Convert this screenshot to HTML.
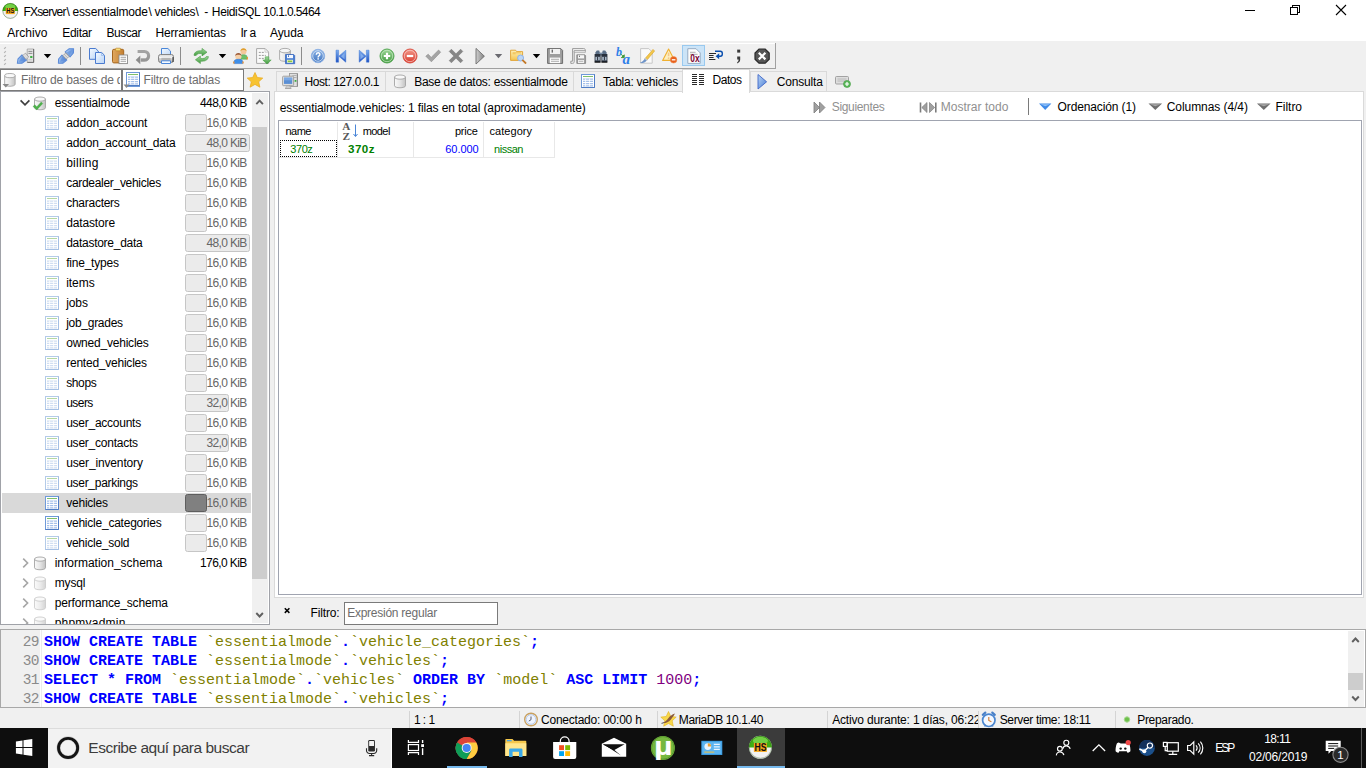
<!DOCTYPE html>
<html lang="es"><head><meta charset="utf-8"><title>HeidiSQL</title>
<style>
*{box-sizing:border-box;margin:0;padding:0}
html,body{width:1366px;height:768px;overflow:hidden;background:#f0f0f0}
body{font-family:"Liberation Sans",sans-serif;font-size:12px;color:#000;position:relative}
.a{position:absolute;white-space:pre}
.t{position:absolute;white-space:pre;line-height:14px;height:14px}
svg{position:absolute;overflow:visible}
.mono{font-family:"Liberation Mono",monospace;font-size:15px;font-weight:bold;line-height:19px;position:absolute;white-space:pre;left:44px}
.ln{font-family:"Liberation Mono",monospace;font-size:14.500px;line-height:19px;position:absolute;white-space:pre;color:#8a8a8a;left:22.700px;letter-spacing:-0.7px}
.kw{color:#0000ff}.id{color:#808000;font-weight:normal}.num{color:#800080;font-weight:normal}.sym{color:#0000ff}.dot{color:#0000ff}
</style></head>
<body>
<div class="a" style="left:0px;top:0px;width:1366px;height:22px;background:#fff"></div>
<div class="a" style="left:0px;top:22px;width:1366px;height:19px;background:#fff"></div>
<div class="t" style="left:23.400px;top:4.500px"><span style="display:inline-block;width:43.2px;letter-spacing:-0.798px;">FXserver</span><span style="display:inline-block;width:5.9px;letter-spacing:1.656px;">\</span><span style="display:inline-block;width:76.1px;letter-spacing:-0.153px;">essentialmode</span><span style="display:inline-block;width:6.0px;letter-spacing:1.656px;">\</span><span style="display:inline-block;width:41.0px;letter-spacing:-0.345px;">vehicles</span><span style="display:inline-block;width:8.6px;letter-spacing:0.664px;">\ </span><span style="display:inline-block;width:7.7px;letter-spacing:0.078px;">- </span><span style="display:inline-block;width:51.5px;letter-spacing:-0.361px;">HeidiSQL </span><span style="display:inline-block;width:66.6px;letter-spacing:-0.610px;">10.1.0.5464</span></div>
<div class="t" style="left:7.2px;top:25.5px;letter-spacing:0.055px;">Archivo</div>
<div class="t" style="left:62.3px;top:25.5px;letter-spacing:-0.310px;">Editar</div>
<div class="t" style="left:106.5px;top:25.5px;letter-spacing:-0.493px;">Buscar</div>
<div class="t" style="left:155.4px;top:25.5px;letter-spacing:-0.128px;">Herramientas</div>
<div class="t" style="left:240.4px;top:25.5px;letter-spacing:-0.536px;">Ir a</div>
<div class="t" style="left:270.1px;top:25.5px;letter-spacing:-0.142px;">Ayuda</div>
<div class="a" style="left:0px;top:43px;width:775px;height:1px;background:#fff"></div>
<div class="a" style="left:0px;top:43px;width:776px;height:26px;border-right:1px solid #a0a0a0;border-bottom:1px solid #a0a0a0"></div>
<div class="a" style="left:682px;top:45px;width:23px;height:21px;background:#cce4f7;border:1px solid #99c9ef"></div>
<div class="a" style="left:0px;top:69px;width:122px;height:22px;background:#fff;border:1px solid #7a7a7a"></div>
<div class="a" style="left:122px;top:69px;width:122px;height:22px;background:#fff;border:1px solid #7a7a7a"></div>
<div class="t" style="left:21px;top:72.500px;width:99px;overflow:hidden;color:#6d6d6d;letter-spacing:-0.15px">Filtro de bases de datos</div>
<div class="t" style="left:143.6px;top:72.5px;color:#6d6d6d;letter-spacing:-0.144px;">Filtro de tablas</div>
<div class="a" style="left:0px;top:91px;width:270px;height:534px;background:#fff;border:1px solid #a0a2a8"></div>
<div class="a" style="left:1px;top:92px;width:251px;height:532px;overflow:hidden">
<div class="t" style="left:53.700px;top:3.5px;letter-spacing:-0.184px;">essentialmode</div>
<div class="t" style="right:5.4px;top:3.5px;letter-spacing:-0.605px;">448,0 KiB</div>
<div class="a" style="left:184px;top:22px;width:22px;height:18px;background:#ebebeb;border:1px solid #c6c6c6;border-radius:2.500px"></div>
<div class="t" style="left:65.200px;top:23.5px;letter-spacing:-0.068px;">addon_account</div>
<div class="t" style="right:5.4px;top:23.5px;color:#666;letter-spacing:-0.647px;">16,0 KiB</div>
<div class="a" style="left:184px;top:42px;width:65px;height:18px;background:#ebebeb;border:1px solid #c6c6c6;border-radius:2.500px"></div>
<div class="t" style="left:65.200px;top:43.5px;letter-spacing:-0.151px;">addon_account_data</div>
<div class="t" style="right:5.4px;top:43.5px;color:#666;letter-spacing:-0.647px;">48,0 KiB</div>
<div class="a" style="left:184px;top:62px;width:22px;height:18px;background:#ebebeb;border:1px solid #c6c6c6;border-radius:2.500px"></div>
<div class="t" style="left:65.200px;top:63.5px;letter-spacing:0.259px;">billing</div>
<div class="t" style="right:5.4px;top:63.5px;color:#666;letter-spacing:-0.647px;">16,0 KiB</div>
<div class="a" style="left:184px;top:82px;width:22px;height:18px;background:#ebebeb;border:1px solid #c6c6c6;border-radius:2.500px"></div>
<div class="t" style="left:65.200px;top:83.5px;letter-spacing:-0.298px;">cardealer_vehicles</div>
<div class="t" style="right:5.4px;top:83.5px;color:#666;letter-spacing:-0.647px;">16,0 KiB</div>
<div class="a" style="left:184px;top:102px;width:22px;height:18px;background:#ebebeb;border:1px solid #c6c6c6;border-radius:2.500px"></div>
<div class="t" style="left:65.200px;top:103.5px;letter-spacing:-0.263px;">characters</div>
<div class="t" style="right:5.4px;top:103.5px;color:#666;letter-spacing:-0.647px;">16,0 KiB</div>
<div class="a" style="left:184px;top:122px;width:22px;height:18px;background:#ebebeb;border:1px solid #c6c6c6;border-radius:2.500px"></div>
<div class="t" style="left:65.200px;top:123.5px;letter-spacing:-0.139px;">datastore</div>
<div class="t" style="right:5.4px;top:123.5px;color:#666;letter-spacing:-0.647px;">16,0 KiB</div>
<div class="a" style="left:184px;top:142px;width:65px;height:18px;background:#ebebeb;border:1px solid #c6c6c6;border-radius:2.500px"></div>
<div class="t" style="left:65.200px;top:143.5px;letter-spacing:-0.276px;">datastore_data</div>
<div class="t" style="right:5.4px;top:143.5px;color:#666;letter-spacing:-0.647px;">48,0 KiB</div>
<div class="a" style="left:184px;top:162px;width:22px;height:18px;background:#ebebeb;border:1px solid #c6c6c6;border-radius:2.500px"></div>
<div class="t" style="left:65.200px;top:163.5px;letter-spacing:-0.220px;">fine_types</div>
<div class="t" style="right:5.4px;top:163.5px;color:#666;letter-spacing:-0.647px;">16,0 KiB</div>
<div class="a" style="left:184px;top:182px;width:22px;height:18px;background:#ebebeb;border:1px solid #c6c6c6;border-radius:2.500px"></div>
<div class="t" style="left:65.200px;top:183.5px;letter-spacing:-0.054px;">items</div>
<div class="t" style="right:5.4px;top:183.5px;color:#666;letter-spacing:-0.647px;">16,0 KiB</div>
<div class="a" style="left:184px;top:202px;width:22px;height:18px;background:#ebebeb;border:1px solid #c6c6c6;border-radius:2.500px"></div>
<div class="t" style="left:65.200px;top:203.5px;letter-spacing:-0.104px;">jobs</div>
<div class="t" style="right:5.4px;top:203.5px;color:#666;letter-spacing:-0.647px;">16,0 KiB</div>
<div class="a" style="left:184px;top:222px;width:22px;height:18px;background:#ebebeb;border:1px solid #c6c6c6;border-radius:2.500px"></div>
<div class="t" style="left:65.200px;top:223.5px;letter-spacing:-0.279px;">job_grades</div>
<div class="t" style="right:5.4px;top:223.5px;color:#666;letter-spacing:-0.647px;">16,0 KiB</div>
<div class="a" style="left:184px;top:242px;width:22px;height:18px;background:#ebebeb;border:1px solid #c6c6c6;border-radius:2.500px"></div>
<div class="t" style="left:65.200px;top:243.5px;letter-spacing:-0.214px;">owned_vehicles</div>
<div class="t" style="right:5.4px;top:243.5px;color:#666;letter-spacing:-0.647px;">16,0 KiB</div>
<div class="a" style="left:184px;top:262px;width:22px;height:18px;background:#ebebeb;border:1px solid #c6c6c6;border-radius:2.500px"></div>
<div class="t" style="left:65.200px;top:263.5px;letter-spacing:-0.231px;">rented_vehicles</div>
<div class="t" style="right:5.4px;top:263.5px;color:#666;letter-spacing:-0.647px;">16,0 KiB</div>
<div class="a" style="left:184px;top:282px;width:22px;height:18px;background:#ebebeb;border:1px solid #c6c6c6;border-radius:2.500px"></div>
<div class="t" style="left:65.200px;top:283.5px;letter-spacing:-0.386px;">shops</div>
<div class="t" style="right:5.4px;top:283.5px;color:#666;letter-spacing:-0.647px;">16,0 KiB</div>
<div class="a" style="left:184px;top:302px;width:43.5px;height:18px;background:#ebebeb;border:1px solid #c6c6c6;border-radius:2.500px"></div>
<div class="t" style="left:65.200px;top:303.5px;letter-spacing:-0.549px;">users</div>
<div class="t" style="right:5.4px;top:303.5px;color:#666;letter-spacing:-0.647px;">32,0 KiB</div>
<div class="a" style="left:184px;top:322px;width:22px;height:18px;background:#ebebeb;border:1px solid #c6c6c6;border-radius:2.500px"></div>
<div class="t" style="left:65.200px;top:323.5px;letter-spacing:-0.257px;">user_accounts</div>
<div class="t" style="right:5.4px;top:323.5px;color:#666;letter-spacing:-0.647px;">16,0 KiB</div>
<div class="a" style="left:184px;top:342px;width:43.5px;height:18px;background:#ebebeb;border:1px solid #c6c6c6;border-radius:2.500px"></div>
<div class="t" style="left:65.200px;top:343.5px;letter-spacing:-0.240px;">user_contacts</div>
<div class="t" style="right:5.4px;top:343.5px;color:#666;letter-spacing:-0.647px;">32,0 KiB</div>
<div class="a" style="left:184px;top:362px;width:22px;height:18px;background:#ebebeb;border:1px solid #c6c6c6;border-radius:2.500px"></div>
<div class="t" style="left:65.200px;top:363.5px;letter-spacing:-0.151px;">user_inventory</div>
<div class="t" style="right:5.4px;top:363.5px;color:#666;letter-spacing:-0.647px;">16,0 KiB</div>
<div class="a" style="left:184px;top:382px;width:22px;height:18px;background:#ebebeb;border:1px solid #c6c6c6;border-radius:2.500px"></div>
<div class="t" style="left:65.200px;top:383.5px;letter-spacing:-0.290px;">user_parkings</div>
<div class="t" style="right:5.4px;top:383.5px;color:#666;letter-spacing:-0.647px;">16,0 KiB</div>
<div class="a" style="left:1px;top:401px;width:249px;height:20px;background:#d9d9d9"></div>
<div class="a" style="left:184px;top:402px;width:22px;height:18px;background:#808080;border:1px solid #5e5e5e;border-radius:2.500px"></div>
<div class="t" style="left:65.200px;top:403.5px;letter-spacing:-0.220px;">vehicles</div>
<div class="t" style="right:5.4px;top:403.5px;color:#666;letter-spacing:-0.647px;">16,0 KiB</div>
<div class="a" style="left:184px;top:422px;width:22px;height:18px;background:#ebebeb;border:1px solid #c6c6c6;border-radius:2.500px"></div>
<div class="t" style="left:65.200px;top:423.5px;letter-spacing:-0.228px;">vehicle_categories</div>
<div class="t" style="right:5.4px;top:423.5px;color:#666;letter-spacing:-0.647px;">16,0 KiB</div>
<div class="a" style="left:184px;top:442px;width:22px;height:18px;background:#ebebeb;border:1px solid #c6c6c6;border-radius:2.500px"></div>
<div class="t" style="left:65.200px;top:443.5px;letter-spacing:-0.246px;">vehicle_sold</div>
<div class="t" style="right:5.4px;top:443.5px;color:#666;letter-spacing:-0.647px;">16,0 KiB</div>
<div class="t" style="left:53.700px;top:463.5px;letter-spacing:-0.015px;">information_schema</div>
<div class="t" style="right:5.4px;top:463.5px;letter-spacing:-0.605px;">176,0 KiB</div>
<div class="t" style="left:53.700px;top:483.5px;letter-spacing:-0.149px;">mysql</div>
<div class="t" style="left:53.700px;top:503.5px;letter-spacing:-0.165px;">performance_schema</div>
<div class="t" style="left:53.700px;top:523.5px;letter-spacing:0.220px;">phpmyadmin</div>
<svg width="251" height="560" style="left:0;top:0"><g transform="translate(33 4.5)"><path d="M.5 2.500v8.800c0 2.600 11 2.600 11 0V2.500z" fill="url(#gCyl)" stroke="#a4a4a4" stroke-width=".9"/><ellipse cx="6" cy="2.600" rx="5.500" ry="2.100" fill="#f8f8f8" stroke="#a4a4a4" stroke-width=".9"/></g><path d="M32 14.5l1.800-1.800 2 2 4.400-4.800 1.600 1.600-6 6.400z" fill="#4cb04a" stroke="#3f9a3c" stroke-width=".3"/><path d="M19.600 8.4l4.400 4.400 4.400-4.400" fill="none" stroke="#404040" stroke-width="1.700"/><g transform="translate(44 24)"><rect x=".5" y=".5" width="13" height="13" fill="#fff" stroke="#b4cbe8"/><path d="M.5 13.500h13v-13" fill="none" stroke="#a4bfe4" stroke-width="1"/><path d="M2 2.500h10" stroke="#b4d8a4" stroke-width="1"/><path d="M2 5.200h10M2 7.400h10M2 9.600h10M2 11.800h10" stroke="#d0def2" stroke-width="1.300"/><path d="M4.600 4.500v8M8.600 4.500v8" stroke="#fff" stroke-width=".8"/></g><g transform="translate(44 44)"><rect x=".5" y=".5" width="13" height="13" fill="#fff" stroke="#b4cbe8"/><path d="M.5 13.500h13v-13" fill="none" stroke="#a4bfe4" stroke-width="1"/><path d="M2 2.500h10" stroke="#b4d8a4" stroke-width="1"/><path d="M2 5.200h10M2 7.400h10M2 9.600h10M2 11.800h10" stroke="#d0def2" stroke-width="1.300"/><path d="M4.600 4.500v8M8.600 4.500v8" stroke="#fff" stroke-width=".8"/></g><g transform="translate(44 64)"><rect x=".5" y=".5" width="13" height="13" fill="#fff" stroke="#b4cbe8"/><path d="M.5 13.500h13v-13" fill="none" stroke="#a4bfe4" stroke-width="1"/><path d="M2 2.500h10" stroke="#b4d8a4" stroke-width="1"/><path d="M2 5.200h10M2 7.400h10M2 9.600h10M2 11.800h10" stroke="#d0def2" stroke-width="1.300"/><path d="M4.600 4.500v8M8.600 4.500v8" stroke="#fff" stroke-width=".8"/></g><g transform="translate(44 84)"><rect x=".5" y=".5" width="13" height="13" fill="#fff" stroke="#b4cbe8"/><path d="M.5 13.500h13v-13" fill="none" stroke="#a4bfe4" stroke-width="1"/><path d="M2 2.500h10" stroke="#b4d8a4" stroke-width="1"/><path d="M2 5.200h10M2 7.400h10M2 9.600h10M2 11.800h10" stroke="#d0def2" stroke-width="1.300"/><path d="M4.600 4.500v8M8.600 4.500v8" stroke="#fff" stroke-width=".8"/></g><g transform="translate(44 104)"><rect x=".5" y=".5" width="13" height="13" fill="#fff" stroke="#b4cbe8"/><path d="M.5 13.500h13v-13" fill="none" stroke="#a4bfe4" stroke-width="1"/><path d="M2 2.500h10" stroke="#b4d8a4" stroke-width="1"/><path d="M2 5.200h10M2 7.400h10M2 9.600h10M2 11.800h10" stroke="#d0def2" stroke-width="1.300"/><path d="M4.600 4.500v8M8.600 4.500v8" stroke="#fff" stroke-width=".8"/></g><g transform="translate(44 124)"><rect x=".5" y=".5" width="13" height="13" fill="#fff" stroke="#b4cbe8"/><path d="M.5 13.500h13v-13" fill="none" stroke="#a4bfe4" stroke-width="1"/><path d="M2 2.500h10" stroke="#b4d8a4" stroke-width="1"/><path d="M2 5.200h10M2 7.400h10M2 9.600h10M2 11.800h10" stroke="#d0def2" stroke-width="1.300"/><path d="M4.600 4.500v8M8.600 4.500v8" stroke="#fff" stroke-width=".8"/></g><g transform="translate(44 144)"><rect x=".5" y=".5" width="13" height="13" fill="#fff" stroke="#b4cbe8"/><path d="M.5 13.500h13v-13" fill="none" stroke="#a4bfe4" stroke-width="1"/><path d="M2 2.500h10" stroke="#b4d8a4" stroke-width="1"/><path d="M2 5.200h10M2 7.400h10M2 9.600h10M2 11.800h10" stroke="#d0def2" stroke-width="1.300"/><path d="M4.600 4.500v8M8.600 4.500v8" stroke="#fff" stroke-width=".8"/></g><g transform="translate(44 164)"><rect x=".5" y=".5" width="13" height="13" fill="#fff" stroke="#b4cbe8"/><path d="M.5 13.500h13v-13" fill="none" stroke="#a4bfe4" stroke-width="1"/><path d="M2 2.500h10" stroke="#b4d8a4" stroke-width="1"/><path d="M2 5.200h10M2 7.400h10M2 9.600h10M2 11.800h10" stroke="#d0def2" stroke-width="1.300"/><path d="M4.600 4.500v8M8.600 4.500v8" stroke="#fff" stroke-width=".8"/></g><g transform="translate(44 184)"><rect x=".5" y=".5" width="13" height="13" fill="#fff" stroke="#b4cbe8"/><path d="M.5 13.500h13v-13" fill="none" stroke="#a4bfe4" stroke-width="1"/><path d="M2 2.500h10" stroke="#b4d8a4" stroke-width="1"/><path d="M2 5.200h10M2 7.400h10M2 9.600h10M2 11.800h10" stroke="#d0def2" stroke-width="1.300"/><path d="M4.600 4.500v8M8.600 4.500v8" stroke="#fff" stroke-width=".8"/></g><g transform="translate(44 204)"><rect x=".5" y=".5" width="13" height="13" fill="#fff" stroke="#b4cbe8"/><path d="M.5 13.500h13v-13" fill="none" stroke="#a4bfe4" stroke-width="1"/><path d="M2 2.500h10" stroke="#b4d8a4" stroke-width="1"/><path d="M2 5.200h10M2 7.400h10M2 9.600h10M2 11.800h10" stroke="#d0def2" stroke-width="1.300"/><path d="M4.600 4.500v8M8.600 4.500v8" stroke="#fff" stroke-width=".8"/></g><g transform="translate(44 224)"><rect x=".5" y=".5" width="13" height="13" fill="#fff" stroke="#b4cbe8"/><path d="M.5 13.500h13v-13" fill="none" stroke="#a4bfe4" stroke-width="1"/><path d="M2 2.500h10" stroke="#b4d8a4" stroke-width="1"/><path d="M2 5.200h10M2 7.400h10M2 9.600h10M2 11.800h10" stroke="#d0def2" stroke-width="1.300"/><path d="M4.600 4.500v8M8.600 4.500v8" stroke="#fff" stroke-width=".8"/></g><g transform="translate(44 244)"><rect x=".5" y=".5" width="13" height="13" fill="#fff" stroke="#b4cbe8"/><path d="M.5 13.500h13v-13" fill="none" stroke="#a4bfe4" stroke-width="1"/><path d="M2 2.500h10" stroke="#b4d8a4" stroke-width="1"/><path d="M2 5.200h10M2 7.400h10M2 9.600h10M2 11.800h10" stroke="#d0def2" stroke-width="1.300"/><path d="M4.600 4.500v8M8.600 4.500v8" stroke="#fff" stroke-width=".8"/></g><g transform="translate(44 264)"><rect x=".5" y=".5" width="13" height="13" fill="#fff" stroke="#b4cbe8"/><path d="M.5 13.500h13v-13" fill="none" stroke="#a4bfe4" stroke-width="1"/><path d="M2 2.500h10" stroke="#b4d8a4" stroke-width="1"/><path d="M2 5.200h10M2 7.400h10M2 9.600h10M2 11.800h10" stroke="#d0def2" stroke-width="1.300"/><path d="M4.600 4.500v8M8.600 4.500v8" stroke="#fff" stroke-width=".8"/></g><g transform="translate(44 284)"><rect x=".5" y=".5" width="13" height="13" fill="#fff" stroke="#b4cbe8"/><path d="M.5 13.500h13v-13" fill="none" stroke="#a4bfe4" stroke-width="1"/><path d="M2 2.500h10" stroke="#b4d8a4" stroke-width="1"/><path d="M2 5.200h10M2 7.400h10M2 9.600h10M2 11.800h10" stroke="#d0def2" stroke-width="1.300"/><path d="M4.600 4.500v8M8.600 4.500v8" stroke="#fff" stroke-width=".8"/></g><g transform="translate(44 304)"><rect x=".5" y=".5" width="13" height="13" fill="#fff" stroke="#b4cbe8"/><path d="M.5 13.500h13v-13" fill="none" stroke="#a4bfe4" stroke-width="1"/><path d="M2 2.500h10" stroke="#b4d8a4" stroke-width="1"/><path d="M2 5.200h10M2 7.400h10M2 9.600h10M2 11.800h10" stroke="#d0def2" stroke-width="1.300"/><path d="M4.600 4.500v8M8.600 4.500v8" stroke="#fff" stroke-width=".8"/></g><g transform="translate(44 324)"><rect x=".5" y=".5" width="13" height="13" fill="#fff" stroke="#b4cbe8"/><path d="M.5 13.500h13v-13" fill="none" stroke="#a4bfe4" stroke-width="1"/><path d="M2 2.500h10" stroke="#b4d8a4" stroke-width="1"/><path d="M2 5.200h10M2 7.400h10M2 9.600h10M2 11.800h10" stroke="#d0def2" stroke-width="1.300"/><path d="M4.600 4.500v8M8.600 4.500v8" stroke="#fff" stroke-width=".8"/></g><g transform="translate(44 344)"><rect x=".5" y=".5" width="13" height="13" fill="#fff" stroke="#b4cbe8"/><path d="M.5 13.500h13v-13" fill="none" stroke="#a4bfe4" stroke-width="1"/><path d="M2 2.500h10" stroke="#b4d8a4" stroke-width="1"/><path d="M2 5.200h10M2 7.400h10M2 9.600h10M2 11.800h10" stroke="#d0def2" stroke-width="1.300"/><path d="M4.600 4.500v8M8.600 4.500v8" stroke="#fff" stroke-width=".8"/></g><g transform="translate(44 364)"><rect x=".5" y=".5" width="13" height="13" fill="#fff" stroke="#b4cbe8"/><path d="M.5 13.500h13v-13" fill="none" stroke="#a4bfe4" stroke-width="1"/><path d="M2 2.500h10" stroke="#b4d8a4" stroke-width="1"/><path d="M2 5.200h10M2 7.400h10M2 9.600h10M2 11.800h10" stroke="#d0def2" stroke-width="1.300"/><path d="M4.600 4.500v8M8.600 4.500v8" stroke="#fff" stroke-width=".8"/></g><g transform="translate(44 384)"><rect x=".5" y=".5" width="13" height="13" fill="#fff" stroke="#b4cbe8"/><path d="M.5 13.500h13v-13" fill="none" stroke="#a4bfe4" stroke-width="1"/><path d="M2 2.500h10" stroke="#b4d8a4" stroke-width="1"/><path d="M2 5.200h10M2 7.400h10M2 9.600h10M2 11.800h10" stroke="#d0def2" stroke-width="1.300"/><path d="M4.600 4.500v8M8.600 4.500v8" stroke="#fff" stroke-width=".8"/></g><g transform="translate(44 404)"><rect x=".5" y=".5" width="13" height="13" fill="#fff" stroke="#6f9ad8"/><path d="M.5 13.500h13v-13" fill="none" stroke="#4f7cc4" stroke-width="1"/><path d="M2 2.500h10" stroke="#7fc06a" stroke-width="1"/><path d="M2 5.200h10M2 7.400h10M2 9.600h10M2 11.800h10" stroke="#a4c0ea" stroke-width="1.300"/><path d="M4.600 4.500v8M8.600 4.500v8" stroke="#fff" stroke-width=".8"/></g><g transform="translate(44 424)"><rect x=".5" y=".5" width="13" height="13" fill="#fff" stroke="#6f9ad8"/><path d="M.5 13.500h13v-13" fill="none" stroke="#4f7cc4" stroke-width="1"/><path d="M2 2.500h10" stroke="#7fc06a" stroke-width="1"/><path d="M2 5.200h10M2 7.400h10M2 9.600h10M2 11.800h10" stroke="#a4c0ea" stroke-width="1.300"/><path d="M4.600 4.500v8M8.600 4.500v8" stroke="#fff" stroke-width=".8"/></g><g transform="translate(44 444)"><rect x=".5" y=".5" width="13" height="13" fill="#fff" stroke="#b4cbe8"/><path d="M.5 13.500h13v-13" fill="none" stroke="#a4bfe4" stroke-width="1"/><path d="M2 2.500h10" stroke="#b4d8a4" stroke-width="1"/><path d="M2 5.200h10M2 7.400h10M2 9.600h10M2 11.800h10" stroke="#d0def2" stroke-width="1.300"/><path d="M4.600 4.500v8M8.600 4.500v8" stroke="#fff" stroke-width=".8"/></g><g transform="translate(33 464.5)"><path d="M.5 2.500v8.800c0 2.600 11 2.600 11 0V2.500z" fill="url(#gCyl)" stroke="#a4a4a4" stroke-width=".9"/><ellipse cx="6" cy="2.600" rx="5.500" ry="2.100" fill="#f8f8f8" stroke="#a4a4a4" stroke-width=".9"/></g><path d="M22.200 466.6l4.400 4.400-4.400 4.400" fill="none" stroke="#a6a6a6" stroke-width="1.600"/><g transform="translate(33 484.5)" opacity=".7"><path d="M.5 2.500v8.800c0 2.600 11 2.600 11 0V2.500z" fill="url(#gCyl)" stroke="#b8b8b8" stroke-width=".9"/><ellipse cx="6" cy="2.600" rx="5.500" ry="2.100" fill="#f8f8f8" stroke="#b8b8b8" stroke-width=".9"/></g><path d="M22.200 486.6l4.400 4.400-4.400 4.400" fill="none" stroke="#a6a6a6" stroke-width="1.600"/><g transform="translate(33 504.5)" opacity=".7"><path d="M.5 2.500v8.800c0 2.600 11 2.600 11 0V2.500z" fill="url(#gCyl)" stroke="#b8b8b8" stroke-width=".9"/><ellipse cx="6" cy="2.600" rx="5.500" ry="2.100" fill="#f8f8f8" stroke="#b8b8b8" stroke-width=".9"/></g><path d="M22.200 506.6l4.400 4.400-4.400 4.400" fill="none" stroke="#a6a6a6" stroke-width="1.600"/><g transform="translate(33 524.5)" opacity=".7"><path d="M.5 2.500v8.800c0 2.600 11 2.600 11 0V2.500z" fill="url(#gCyl)" stroke="#b8b8b8" stroke-width=".9"/><ellipse cx="6" cy="2.600" rx="5.500" ry="2.100" fill="#f8f8f8" stroke="#b8b8b8" stroke-width=".9"/></g><path d="M22.200 526.6l4.400 4.400-4.400 4.400" fill="none" stroke="#a6a6a6" stroke-width="1.600"/></svg>
</div>
<div class="a" style="left:252px;top:93px;width:16px;height:530px;background:#f0f0f0"></div>
<div class="a" style="left:252px;top:127px;width:15px;height:452px;background:#cdcdcd"></div>
<div class="a" style="left:274px;top:91px;width:1090px;height:507px;background:#fff;border:1px solid #dadada"></div>
<div class="a" style="left:276px;top:71px;width:110px;height:20px;background:#f0f0f0;border:1px solid #d9d9d9;border-bottom:none"></div>
<div class="t" style="left:304.6px;top:74.5px;letter-spacing:-0.466px;">Host: 127.0.0.1</div>
<div class="a" style="left:385px;top:71px;width:189px;height:20px;background:#f0f0f0;border:1px solid #d9d9d9;border-bottom:none"></div>
<div class="t" style="left:414.2px;top:74.5px;letter-spacing:-0.260px;">Base de datos: essentialmode</div>
<div class="a" style="left:573px;top:71px;width:110px;height:20px;background:#f0f0f0;border:1px solid #d9d9d9;border-bottom:none"></div>
<div class="t" style="left:603px;top:74.5px;letter-spacing:-0.248px;">Tabla: vehicles</div>
<div class="a" style="left:750px;top:71px;width:77px;height:20px;background:#f0f0f0;border:1px solid #d9d9d9;border-bottom:none"></div>
<div class="t" style="left:776.7px;top:74.5px;letter-spacing:-0.172px;">Consulta</div>
<div class="a" style="left:682px;top:69px;width:68px;height:24px;background:#fff;border:1px solid #d9d9d9;border-bottom:none"></div>
<div class="t" style="left:712.5px;top:72.5px;letter-spacing:-0.472px;">Datos</div>
<div class="t" style="left:279.7px;top:100.5px;letter-spacing:-0.106px;">essentialmode.vehicles: 1 filas en total (aproximadamente)</div>
<div class="t" style="left:831.8px;top:99.5px;color:#909090;letter-spacing:-0.345px;">Siguientes</div>
<div class="t" style="left:940.7px;top:99.5px;color:#909090;letter-spacing:0.028px;">Mostrar todo</div>
<div class="a" style="left:1028px;top:98px;width:1px;height:17px;background:#7a7a7a"></div>
<div class="t" style="left:1057.6px;top:99.5px;letter-spacing:-0.125px;">Ordenación (1)</div>
<div class="t" style="left:1166.7px;top:99.5px;letter-spacing:-0.059px;">Columnas (4/4)</div>
<div class="t" style="left:1275.5px;top:99.5px;letter-spacing:-0.029px;">Filtro</div>
<div class="a" style="left:278px;top:120px;width:1084px;height:475px;background:#fff;border:1px solid #a0a4b0"></div>
<div class="a" style="left:337px;top:122px;width:1px;height:36px;background:#e8e8e8"></div>
<div class="a" style="left:413px;top:122px;width:1px;height:36px;background:#e8e8e8"></div>
<div class="a" style="left:483px;top:122px;width:1px;height:36px;background:#e8e8e8"></div>
<div class="a" style="left:554px;top:122px;width:1px;height:36px;background:#e8e8e8"></div>
<div class="a" style="left:279px;top:157px;width:276px;height:1px;background:#e8e8e8"></div>
<div class="a" style="left:280px;top:140px;width:57px;height:17px;border:1px dotted #000"></div>
<div class="t" style="left:285.5px;top:124px;font-size:11px;letter-spacing:-0.508px;">name</div>
<div class="t" style="left:362.7px;top:124px;font-size:11px;letter-spacing:-0.574px;">model</div>
<div class="t" style="right:888.5px;top:124px;font-size:11px;letter-spacing:-0.269px;">price</div>
<div class="t" style="left:489.6px;top:124px;font-size:11px;letter-spacing:0.025px;">category</div>
<div class="t" style="left:290.3px;top:142px;font-size:11px;color:#008000;letter-spacing:-0.440px;">370z</div>
<div class="t" style="left:348.1px;top:142px;font-size:11.6px;color:#008000;font-weight:bold;letter-spacing:0.440px;">370z</div>
<div class="t" style="right:887.3px;top:142px;font-size:11px;color:#0000ff;letter-spacing:-0.026px;">60.000</div>
<div class="t" style="left:494px;top:142px;font-size:11px;color:#008000;letter-spacing:-0.466px;">nissan</div>
<div class="t" style="left:310.6px;top:605.5px;letter-spacing:-0.157px;">Filtro:</div>
<div class="a" style="left:344px;top:602px;width:154px;height:23px;background:#fff;border:1px solid #7a7a7a"></div>
<div class="t" style="left:347.2px;top:605.5px;color:#6d6d6d;letter-spacing:-0.251px;">Expresión regular</div>
<div class="a" style="left:342.200px;top:122.300px;font-family:'Liberation Serif',serif;font-weight:bold;font-size:10px;line-height:9.200px;color:#585858;text-align:center;width:8.500px;transform:scaleX(1.12)">A<br>Z</div>
<div class="a" style="left:0px;top:629px;width:1366px;height:79px;background:#fff;border:1px solid #a8a8a8"></div>
<div class="a" style="left:1px;top:630px;width:39px;height:77px;background:#f0f0f0"></div>
<div class="a" style="left:41px;top:630px;width:1px;height:77px;background:#ececec"></div>
<div class="ln" style="top:633px">29</div>
<div class="mono" style="top:633px"><span class="kw">SHOW CREATE TABLE </span><span class="id">`essentialmode`</span><span class="dot">.</span><span class="id">`vehicle_categories`</span><span class="sym">;</span></div>
<div class="ln" style="top:652px">30</div>
<div class="mono" style="top:652px"><span class="kw">SHOW CREATE TABLE </span><span class="id">`essentialmode`</span><span class="dot">.</span><span class="id">`vehicles`</span><span class="sym">;</span></div>
<div class="ln" style="top:671px">31</div>
<div class="mono" style="top:671px"><span class="kw">SELECT </span><span class="sym">* </span><span class="kw">FROM </span><span class="id">`essentialmode`</span><span class="dot">.</span><span class="id">`vehicles`</span><span class="kw"> ORDER BY </span><span class="id">`model`</span><span class="kw"> ASC LIMIT </span><span class="num">1000</span><span class="sym">;</span></div>
<div class="ln" style="top:690px">32</div>
<div class="mono" style="top:690px"><span class="kw">SHOW CREATE TABLE </span><span class="id">`essentialmode`</span><span class="dot">.</span><span class="id">`vehicles`</span><span class="sym">;</span></div>
<div class="a" style="left:1348px;top:631px;width:16px;height:76px;background:#f0f0f0"></div>
<div class="a" style="left:1348px;top:673px;width:15px;height:17px;background:#cdcdcd"></div>
<div class="a" style="left:409px;top:711px;width:1px;height:17px;background:#d4d4d4"></div>
<div class="a" style="left:519px;top:711px;width:1px;height:17px;background:#d4d4d4"></div>
<div class="a" style="left:657px;top:711px;width:1px;height:17px;background:#d4d4d4"></div>
<div class="a" style="left:827px;top:711px;width:1px;height:17px;background:#d4d4d4"></div>
<div class="a" style="left:978px;top:711px;width:1px;height:17px;background:#d4d4d4"></div>
<div class="a" style="left:1115px;top:711px;width:1px;height:17px;background:#d4d4d4"></div>
<div class="t" style="left:414px;top:713px;letter-spacing:-0.572px;">1 : 1</div>
<div class="t" style="left:541px;top:713px;letter-spacing:-0.231px;">Conectado: 00:00 h</div>
<div class="t" style="left:678.8px;top:713px;letter-spacing:-0.390px;">MariaDB 10.1.40</div>
<div class="t" style="left:832.200px;top:713px;width:145.500px;overflow:hidden;letter-spacing:-0.164px;">Activo durante: 1 días, 06:22</div>
<div class="t" style="left:999.7px;top:713px;letter-spacing:-0.353px;">Server time: 18:11</div>
<div class="t" style="left:1137.2px;top:713px;letter-spacing:-0.298px;">Preparado.</div>
<div class="a" style="left:0px;top:728px;width:1366px;height:40px;background:#0e0e0e"></div>
<div class="a" style="left:48px;top:728px;width:344px;height:40px;background:#f2f2f2;border-top:1px solid #dcdcdc;border-right:1px solid #fff"></div>
<div class="a" style="left:737px;top:728px;width:48px;height:40px;background:#3b3b3b"></div>
<div class="a" style="left:737px;top:766px;width:48px;height:2px;background:#76b9ed"></div>
<div class="a" style="left:447px;top:766px;width:40px;height:2px;background:#76b9ed"></div>
<div class="t" style="left:88.3px;top:739.4px;font-size:15.5px;line-height:18px;height:18px;color:#3c3c3c;letter-spacing:-0.480px;">Escribe aquí para buscar</div>
<div class="t" style="left:1215.3px;top:741px;color:#fff;letter-spacing:-2.072px;">ESP</div>
<div class="t" style="left:1264.2px;top:731.5px;color:#fff;letter-spacing:-0.608px;">18:11</div>
<div class="t" style="left:1249px;top:749.5px;color:#fff;letter-spacing:-0.186px;">02/06/2019</div>
<div class="a" style="left:1361px;top:728px;width:1px;height:40px;background:#5a5a5a"></div>
<svg width="1366" height="768" style="left:0;top:0;pointer-events:none"><defs><linearGradient id="gBlue" x1="0" y1="0" x2="1" y2="1"><stop offset="0" stop-color="#b8d4f6"/><stop offset="1" stop-color="#4a7ed4"/></linearGradient>
<linearGradient id="gBlueV" x1="0" y1="0" x2="0" y2="1"><stop offset="0" stop-color="#7fb0ee"/><stop offset="1" stop-color="#1f4fc0"/></linearGradient>
<linearGradient id="gPage" x1="0" y1="0" x2="1" y2="1"><stop offset="0" stop-color="#f4f9ff"/><stop offset="1" stop-color="#b9d4f6"/></linearGradient>
<linearGradient id="gGrayV" x1="0" y1="0" x2="0" y2="1"><stop offset="0" stop-color="#f2f2f2"/><stop offset="1" stop-color="#b8b8b8"/></linearGradient>
<linearGradient id="gGrayH" x1="0" y1="0" x2="1" y2="0"><stop offset="0" stop-color="#cfcfcf"/><stop offset="1" stop-color="#808080"/></linearGradient>
<linearGradient id="gGreenV" x1="0" y1="0" x2="0" y2="1"><stop offset="0" stop-color="#9fd89a"/><stop offset="1" stop-color="#3f9a3c"/></linearGradient>
<linearGradient id="gRedV" x1="0" y1="0" x2="0" y2="1"><stop offset="0" stop-color="#f39a8c"/><stop offset="1" stop-color="#d8392c"/></linearGradient>
<linearGradient id="gBrown" x1="0" y1="0" x2="1" y2="0"><stop offset="0" stop-color="#e0a860"/><stop offset="1" stop-color="#c47f30"/></linearGradient>
<linearGradient id="gFolder" x1="0" y1="0" x2="0" y2="1"><stop offset="0" stop-color="#fdf1bb"/><stop offset="1" stop-color="#f5c44e"/></linearGradient>
<linearGradient id="gCyl" x1="0" y1="0" x2="1" y2="0"><stop offset="0" stop-color="#fafafa"/><stop offset="0.5" stop-color="#e6e6e6"/><stop offset="1" stop-color="#c2c2c2"/></linearGradient>
<linearGradient id="gHelp" x1="0" y1="0" x2="0" y2="1"><stop offset="0" stop-color="#8db4e6"/><stop offset="1" stop-color="#3f74c0"/></linearGradient></defs>
<path d="M1245 10.500h10" stroke="#000" stroke-width="1"/>
<path d="M1290.500 7.500h7v7h-7z M1292.500 7.500v-2h7v7h-2" fill="none" stroke="#000" stroke-width="1" shape-rendering="crispEdges"/>
<path d="M1336 5l10 10M1346 5l-10 10" stroke="#000" stroke-width="1.100"/>
<g transform="translate(10.300 10.900)"><circle r="7.800" fill="#f2f2f2"/><path d="M-7.800 .2A7.800 7.800 0 0 1 7.800 .2z" fill="#3fae14"/><ellipse cx="0" cy="-4.400" rx="5" ry="2.600" fill="#7fd850" opacity=".8"/><circle r="7.500" fill="none" stroke="#2a5a1a" stroke-width=".7" opacity=".6"/><rect x="-4.500" y="-3" width="9" height="6.200" fill="#f5a81c"/><text x="0" y="2.500" text-anchor="middle" font-family="Liberation Sans,sans-serif" font-weight="bold" font-size="7" fill="#111" textLength="8" lengthAdjust="spacingAndGlyphs">HS</text></g>
<path d="M4.200 48.8l1.600-1.600" stroke="#b4b4b4" stroke-width="1.200"/>
<path d="M4.200 52.8l1.600-1.600" stroke="#b4b4b4" stroke-width="1.200"/>
<path d="M4.200 56.8l1.600-1.600" stroke="#b4b4b4" stroke-width="1.200"/>
<path d="M4.200 60.8l1.600-1.600" stroke="#b4b4b4" stroke-width="1.200"/>
<path d="M4.200 64.8l1.600-1.600" stroke="#b4b4b4" stroke-width="1.200"/>
<g transform="translate(18 48)"><path d="M9.200 1h6.600v13.400H9.200z" fill="#e6e6e6" stroke="#9a9a9a" stroke-width=".7"/>
<path d="M15.600 1v13.400H9.400" fill="none" stroke="#6e6e6e" stroke-width="1"/>
<path d="M10.400 3.400h4M10.400 5.400h4" stroke="#8c8c8c" stroke-width="1"/>
<path d="M10.400 11.500h4M10.400 13h4" stroke="#c8c8c8" stroke-width=".8"/>
<rect x="12.200" y="8" width="2.200" height="2" fill="#3cb043"/>
<g transform="rotate(-40 5 10.500)"><path d="M-2.400 10.500L1 7.500 6.600 7V14L1 13.500z" fill="url(#gBlue)" stroke="#5a8ad8" stroke-width="1" stroke-linejoin="round"/><path d="M-.5 10.500L5.500 8.200v4.600z" fill="#5a8cd8" opacity=".55"/><rect x="6.600" y="8" width="3.800" height="5" fill="#c9c9c9" stroke="#8a8a8a" stroke-width=".5"/><path d="M7.800 8.200v4.600M9.200 8.200v4.600" stroke="#f4f4f4" stroke-width=".7"/></g></g>
<g transform="translate(58 48)"><g transform="rotate(-44 8 8)"><path d="M-2.600 8L.6 5 5.800 4.500V11.500L.6 11z" fill="url(#gBlue)" stroke="#5a8ad8" stroke-width="1" stroke-linejoin="round"/><path d="M18.600 8L15.400 5 10.200 4.500V11.500L15.400 11z" fill="url(#gBlue)" stroke="#5a8ad8" stroke-width="1" stroke-linejoin="round"/><path d="M-.5 8L5 5.800v4.400z" fill="#5a8cd8" opacity=".55"/><path d="M16.500 8L11 5.800v4.400z" fill="#5a8cd8" opacity=".55"/><rect x="5.800" y="5.500" width="4.400" height="5" fill="#bdbdbd" stroke="#8a8a8a" stroke-width=".5"/><path d="M7 5.700v4.600M8.900 5.700v4.600" stroke="#f6f6f6" stroke-width=".8"/></g></g>
<g transform="translate(89 48)"><path d="M.5.5h6.2l2.6 2.6v8.2H.5z" fill="url(#gPage)" stroke="#4a7bd0" stroke-width="1"/>
<path d="M6.5 4.5h6.2l2.8 2.8v8.2H6.5z" fill="url(#gPage)" stroke="#4a7bd0" stroke-width="1"/>
<path d="M12.5 4.7v2.8h2.8" fill="none" stroke="#8fb3ea" stroke-width=".7"/></g>
<g transform="translate(112 48)"><rect x=".5" y="1.3" width="11.2" height="13.6" rx="1.4" fill="url(#gBrown)" stroke="#a5661f" stroke-width="1"/>
<rect x="3.6" y=".2" width="5" height="2.6" rx=".6" fill="#f8dc7a" stroke="#b8801f" stroke-width=".6"/>
<rect x="7" y="7" width="8.5" height="8.6" fill="#fdfdfd" stroke="#8c8c8c" stroke-width=".9"/>
<path d="M8.6 9.3h5.4M8.6 11.3h5.4M8.6 13.3h5.4" stroke="#9a9a9a" stroke-width=".9"/></g>
<g transform="translate(135 48)"><path d="M2.6 3.4h6.8c5.6 0 5.6 8.6 0 8.6H5.8" fill="none" stroke="url(#gGrayV)" stroke-width="3.400"/>
<path d="M2.6 3.4h6.8c5.6 0 5.6 8.6 0 8.6H5.8" fill="none" stroke="#8a8a8a" stroke-width="3" opacity=".75"/>
<path d="M.7 12l4.6-4.4v8.6z" fill="#8c8c8c"/></g>
<g transform="translate(158 48)"><path d="M3.5.5h6.4l2.6 2.6v5.4h-9z" fill="url(#gPage)" stroke="#4a86d8" stroke-width="1"/>
<rect x=".6" y="6.6" width="14.8" height="7.8" rx="1.8" fill="url(#gGrayV)" stroke="#7c7c7c" stroke-width="1"/>
<path d="M1.2 9.3h13.6" stroke="#fff" stroke-width="1"/>
<rect x="3.4" y="9.8" width="9.2" height="2.6" fill="#b4b4b4"/>
<path d="M3.5 12.8h9v2.7h-9z" fill="#f4f9ff" stroke="#4a86d8" stroke-width="1"/>
<path d="M15 9v5" stroke="#333" stroke-width="1"/></g>
<g transform="translate(193 48)"><path d="M1 7.4C1.2 3.6 5 2.4 9 2.8V.4l5 3.8-5 3.7V5.6C6 5.2 4 5.6 3.2 7.4z" fill="url(#gGreenV)" stroke="#4a9a46" stroke-width=".6"/>
<path d="M15.4 8.6c-.2 3.8-4 5-8 4.6v2.4l-5-3.8 5-3.7v2.3c3 .4 5 0 5.800-1.800z" fill="url(#gGreenV)" stroke="#4a9a46" stroke-width=".6"/></g>
<g transform="translate(233 48)"><circle cx="10.5" cy="3.6" r="3" fill="#f3c79a"/><path d="M7.4 3.200C7.400-.8 13.600-.8 13.600 3.200 12.400 1.700 8.600 1.700 7.400 3.200z" fill="#e0a030"/>
<path d="M7 11.200V8.400c0-2.200 7-2.200 7 0v2.800z" fill="#6cc06a" stroke="#4e9a4c" stroke-width=".5"/>
<path d="M14.300 9v2.400" stroke="#e89a3a" stroke-width="1.400"/>
<circle cx="5.400" cy="8.400" r="3.100" fill="#f6cfa6"/><path d="M2.200 8.200C2.200 3.800 8.600 3.800 8.600 8.200 7.400 6.400 3.400 6.400 2.200 8.200z" fill="#9a5a3a"/>
<path d="M1.200 15.600v-2.400c0-2.600 8.400-2.600 8.400 0v2.400z" fill="#3f8fe8" stroke="#2f6fc8" stroke-width=".5"/>
<path d="M.8 13.400v2.200M10 13.400v2.200" stroke="#e8923a" stroke-width="1.400"/></g>
<g transform="translate(256 48)"><path d="M.6.6h8.600l3.400 3.400v11.400H.6z" fill="#fafafa" stroke="#a8a8a8" stroke-width="1"/>
<path d="M9 .8v3.400h3.400" fill="none" stroke="#c4c4c4" stroke-width=".8"/>
<path d="M2.800 4.400h2M5.800 4.400h2M2.800 7.400h2M5.800 7.400h2M8.800 7.400h1M2.800 10.400h2M5.800 10.400h2" stroke="#9a9a9a" stroke-width="1"/>
<path d="M9.200 8.800h3.600v3.200h2.400l-4.200 4-4.200-4h2.400z" fill="url(#gGreenV)" stroke="#3f9a3c" stroke-width=".5"/></g>
<g transform="translate(279 48)"><path d="M.6 2.600v8.600c0 2.800 10.800 2.800 10.800 0V2.600z" fill="url(#gCyl)" stroke="#a6a6a6" stroke-width=".9"/>
<ellipse cx="6" cy="2.600" rx="5.400" ry="2.200" fill="#f6f6f6" stroke="#a6a6a6" stroke-width=".9"/>
<path d="M6.500 6.500h8.200l1 1v8.200H6.500z" fill="#4a7fd4" stroke="#2f5fb8" stroke-width=".7"/>
<rect x="8" y="7" width="6" height="3.200" fill="#f4f8ff"/><rect x="9" y="7.400" width="1" height="1.400" fill="#2f5fb8"/>
<rect x="8" y="11.800" width="6" height="3" fill="#e8f4c8"/><rect x="8.800" y="12.600" width="4.400" height="1.400" fill="#8cc63f"/></g>
<g transform="translate(310 48)"><circle cx="8" cy="8" r="6.700" fill="url(#gHelp)" stroke="#8fb2e4" stroke-width="1"/>
<circle cx="8" cy="8" r="5.300" fill="none" stroke="#dce8f8" stroke-width=".8"/>
<path d="M6.300 6.700c0-2.500 3.600-2.500 3.600-.2 0 1.300-1.800 1.400-1.800 2.900" fill="none" stroke="#fff" stroke-width="1.400"/><rect x="7.400" y="10.200" width="1.500" height="1.400" fill="#fff"/></g>
<g transform="translate(333 48)"><path d="M3 2.200h2.600v12H3z" fill="url(#gBlueV)" stroke="#3f78d8" stroke-width=".5"/>
<path d="M12.800 2.200v12L5.800 8.200z" fill="url(#gBlueV)" stroke="#3f78d8" stroke-width=".5"/>
<path d="M11.600 5v6.400L8 8.200z" fill="#8fb8f0" opacity=".8"/></g>
<g transform="translate(356 48)"><path d="M10.400 2.200H13v12h-2.600z" fill="url(#gBlueV)" stroke="#3f78d8" stroke-width=".5"/>
<path d="M3.200 2.200v12l7-6z" fill="url(#gBlueV)" stroke="#3f78d8" stroke-width=".5"/>
<path d="M4.400 5v6.400L8 8.200z" fill="#8fb8f0" opacity=".8"/></g>
<g transform="translate(379 48)"><circle cx="8" cy="8" r="7" fill="url(#gGreenV)" stroke="#4a9f48" stroke-width=".9"/>
<circle cx="8" cy="8" r="5.700" fill="none" stroke="#c8eac6" stroke-width=".7"/>
<path d="M8 4.800v6.400M4.800 8h6.400" stroke="#fff" stroke-width="2.200"/></g>
<g transform="translate(402 48)"><circle cx="8" cy="8" r="7" fill="url(#gRedV)" stroke="#d8473a" stroke-width=".9"/>
<circle cx="8" cy="8" r="5.700" fill="none" stroke="#f8cfc8" stroke-width=".7"/>
<path d="M4.800 8h6.400" stroke="#fff" stroke-width="2.200"/></g>
<g transform="translate(425 48)"><path d="M.8 8.200l2.400-2 3 3.200L13.600 2l2 2.200L6.400 13.800z" fill="#a4a4a4" stroke="#8a8a8a" stroke-width=".6"/></g>
<g transform="translate(448 48)"><path d="M1.200 3.400L3.400 1.200 8 5.800l4.600-4.600 2.200 2.200L10.200 8l4.600 4.600-2.200 2.200L8 10.200l-4.600 4.600-2.200-2.200L5.800 8z" fill="#868686" stroke="#747474" stroke-width=".5"/></g>
<g transform="translate(472 48)"><path d="M4 .4v15.600L12.400 8.200z" fill="url(#gGrayH)" stroke="#6e6e6e" stroke-width=".9"/></g>
<g transform="translate(510 48)"><path d="M.6 2.200h5l1 1.400h6v8.800H.6z" fill="url(#gFolder)" stroke="#e0a030" stroke-width=".9"/>
<path d="M2.600 4.800h8.400M2.600 5.800h3" stroke="#f0c050" stroke-width=".9"/>
<circle cx="10.600" cy="10" r="3" fill="#bcd6f6" stroke="#8fb4ea" stroke-width="1"/>
<path d="M12.800 12.400l2.800 2.600" stroke="#c47a2a" stroke-width="1.800" stroke-linecap="round"/></g>
<g transform="translate(547 48)"><path d="M.6.600h13.200l1.800 1.800v13H.6z" fill="#9e9e9e" stroke="#6e6e6e" stroke-width="1"/>
<rect x="3" y="1" width="10" height="5" fill="#f2f2f2"/><rect x="4.600" y="1.600" width="1.400" height="3" fill="#6e6e6e"/>
<rect x="2.800" y="9.600" width="10.400" height="5.600" fill="#fafafa"/><path d="M4 11.400h8M4 13.400h8" stroke="#bdbdbd" stroke-width="1.200"/></g>
<g transform="translate(570 48)"><path d="M2.600.600h11c1.400 0 1.800.8 1.800 2.200H4.200v11c0 1.400-1 1.600-3.400 1.600V13.200h1.800z" fill="#f6f6f6" stroke="#8e8e8e" stroke-width=".9"/>
<path d="M4.200 2.800h11.200v1.600H4.200z" fill="#fafafa" stroke="#8e8e8e" stroke-width=".6"/>
<path d="M6.800 6.800h8l.8.800v7.800H6.800z" fill="#a2a2a2" stroke="#7a7a7a" stroke-width=".7"/>
<rect x="8" y="7.200" width="6" height="3.200" fill="#f6f6f6"/><rect x="9" y="7.600" width="1" height="1.400" fill="#7a7a7a"/>
<rect x="8" y="12" width="6" height="3" fill="#f0f0f0"/><rect x="8.800" y="12.800" width="4.400" height="1" fill="#b4b4b4"/></g>
<g transform="translate(593 48)"><path d="M2.400 4.400l1.400-2h2.400l.6 2v2H2.400z" fill="#5a6e86"/><path d="M9.200 4.400l.6-2h2.400l1.400 2v2H9.200z" fill="#5a6e86"/>
<rect x="6.400" y="4.600" width="3.200" height="3" fill="#7a8ea6"/>
<rect x="1.600" y="6" width="6" height="8" fill="#28303c"/><rect x="8.400" y="6" width="6" height="8" fill="#28303c"/>
<rect x="2.400" y="8.800" width="4.400" height="3.600" fill="#aab8c8"/><rect x="9.200" y="8.800" width="4.400" height="3.600" fill="#aab8c8"/>
<path d="M4.600 8.800v3.600M11.400 8.800v3.600" stroke="#28303c" stroke-width="1"/>
<path d="M1.600 14.200h6M8.400 14.200h6" stroke="#000" stroke-width="1"/></g>
<g transform="translate(616 48)"><text x="0" y="7.800" font-family="Liberation Serif,serif" font-style="italic" font-weight="bold" font-size="12" fill="#2f7fe8">b</text>
<text x="6.600" y="15.800" font-family="Liberation Serif,serif" font-style="italic" font-weight="bold" font-size="15" fill="#2f7fe8">a</text>
<path d="M4.600 5.800l2.600 2.600M8.200 6.800v2.800h-2.800z" stroke="#3f9a3c" stroke-width="1" fill="#3f9a3c"/></g>
<g transform="translate(639 48)"><path d="M1.600.600h8.200l3.400 3.400v11.200H1.600z" fill="#fafafa" stroke="#c2c2c2" stroke-width=".9"/>
<path d="M14 1.400l1.600 1.600-7.600 9-2-1.400z" fill="#f2c84a" stroke="#d8a02a" stroke-width=".6"/>
<path d="M6 10.600l2 1.400c-1.600 2.800-5 3.400-7.400 3 2.400-.6 3.800-2.400 5.400-4.400z" fill="#6f94c8"/>
<path d="M5.600 10.200l2.800 2" stroke="#c8c8c8" stroke-width="1.400"/></g>
<g transform="translate(662 48)"><path d="M6.600 1L.6 12.400h12z" fill="#fdf0c0" stroke="#f0b030" stroke-width="1.100" stroke-linejoin="round"/>
<path d="M6.600 4.600v3.600" stroke="#f4c888" stroke-width="1.600"/><circle cx="6.600" cy="10.200" r=".9" fill="#f4c888"/>
<circle cx="11.600" cy="11.800" r="3.300" fill="#e8601c" stroke="#f09050" stroke-width=".5"/><path d="M9.800 11.800h3.600" stroke="#fff" stroke-width="1.300"/></g>
<g transform="translate(685 48)"><path d="M2.800.700h8.200l4.200 4.200v10.500H2.800z" fill="#fdfdfd" stroke="#8fa4bc" stroke-width=".9" stroke-linejoin="round"/>
<path d="M5 4.300h5.600M5 6.300h7.600" stroke="#9a9a9a" stroke-width=".8"/>
<text x="5.300" y="14.100" font-family="Liberation Sans,sans-serif" font-weight="bold" font-size="10.500" fill="#7a0030" textLength="9.300" lengthAdjust="spacingAndGlyphs">0x</text></g>
<g transform="translate(708 48)"><path d="M1 5.500h7M1 7.500h4.600M1 9.500h4.600M1 11.500h6.400" stroke="#2a2a2a" stroke-width="1"/>
<path d="M7 3.200h5.400c2.600 0 2.600 5 0 5H10.400" fill="none" stroke="#0a4fae" stroke-width="1.400"/>
<path d="M7.600 8.200l3.600-3v6z" fill="#0a4fae"/></g>
<g transform="translate(731 48)"><rect x="6.200" y="1.600" width="3" height="3" fill="#3a3a3a"/>
<path d="M6.200 8.600h3v3c0 2-1.400 3.400-3 3.800v-1.200c.8-.4 1.400-1.200 1.400-2.600H6.200z" fill="#3a3a3a"/></g>
<g transform="translate(754 48)"><path d="M5 1h6.200l4 4v6.200l-4 4H5l-4-4V5z" fill="#565656" stroke="#2a2a2a" stroke-width="1.200"/>
<path d="M4.800 4.800l6.600 6.600M11.400 4.800l-6.600 6.600" stroke="#fff" stroke-width="2.200"/></g>
<g transform="translate(43.8 54)"><path d="M0 0h7.4L3.7 4.2z" fill="#000"/></g>
<g transform="translate(218.8 54)"><path d="M0 0h7.4L3.7 4.2z" fill="#000"/></g>
<g transform="translate(494.8 54)"><path d="M0 0h7.4L3.7 4.2z" fill="#6a6a70"/></g>
<g transform="translate(532.8 54)"><path d="M0 0h7.4L3.7 4.2z" fill="#000"/></g>
<rect x="80" y="47" width="1" height="18" fill="#8c8c8c"/>
<rect x="180" y="47" width="1" height="18" fill="#8c8c8c"/>
<rect x="301" y="47" width="1" height="18" fill="#8c8c8c"/>
<path d="M256.300 104.200l3.300-3.500 3.300 3.500" fill="none" stroke="#606060" stroke-width="1.900"/>
<path d="M256.300 613l3.300 3.500 3.300-3.500" fill="none" stroke="#606060" stroke-width="1.900"/>
<path d="M255 72.500l2.300 5 5.500.600-4.100 3.700 1.200 5.400-4.900-2.800-4.900 2.800 1.200-5.400-4.100-3.700 5.500-.600z" fill="#f7c331" stroke="#e8a81c" stroke-width=".7" stroke-linejoin="round"/>
<path d="M284.800 608.300l4.600 4.600M289.400 608.300l-4.600 4.600" stroke="#000" stroke-width="1.500"/>
<g transform="translate(4.200 73) scale(.95 1)"><path d="M.5 2.500v8.800c0 2.600 11 2.600 11 0V2.500z" fill="url(#gCyl)" stroke="#a4a4a4" stroke-width=".9"/><ellipse cx="6" cy="2.600" rx="5.500" ry="2.100" fill="#f8f8f8" stroke="#a4a4a4" stroke-width=".9"/></g>
<path d="M2.500 84h6.600l-3.300 3.600z" fill="#8a8a8a"/>
<g transform="translate(126 72)"><rect x=".5" y=".5" width="13" height="14" fill="#fff" stroke="#6f9ad8"/><path d="M.5 13.500h13v-13" fill="none" stroke="#4f7cc4" stroke-width="1"/><path d="M2 2.500h10" stroke="#7fc06a" stroke-width="1"/><path d="M2 5.200h10M2 7.400h10M2 9.600h10M2 11.800h10" stroke="#a4c0ea" stroke-width="1.300"/><path d="M4.600 4.500v8M8.600 4.500v8" stroke="#fff" stroke-width=".8"/></g>
<path d="M123.500 84.500h6l-3 3.400z" fill="#8a8a8a"/>
<g transform="translate(282 73)"><rect x="7.500" y=".5" width="8" height="13" fill="#e0e0e0" stroke="#9a9a9a" stroke-width=".9"/><path d="M10.500 2.500h4M10.500 4.500h4" stroke="#a8a8a8" stroke-width=".8"/><rect x="12.600" y="7" width="1.800" height="1.800" fill="#3cb043"/><path d="M15.300 1v12.300" stroke="#7c7c7c" stroke-width=".8"/><rect x=".6" y="3.200" width="11" height="9.500" rx=".9" fill="#dedede" stroke="#9a9a9a" stroke-width=".9"/><rect x="2" y="4.700" width="8.200" height="6.200" fill="#5a8fd4"/><path d="M2 4.700h8.200v2.600H2z" fill="#7aa8e4"/><path d="M4.400 13.200l-.6 1.800h5l-.6-1.800z" fill="#e8e8e8" stroke="#a0a0a0" stroke-width=".6"/><path d="M3 15.400h6.400" stroke="#a0a0a0" stroke-width="1"/></g>
<g transform="translate(394 74.5)"><path d="M.5 2.500v8.800c0 2.600 11 2.600 11 0V2.500z" fill="url(#gCyl)" stroke="#a4a4a4" stroke-width=".9"/><ellipse cx="6" cy="2.600" rx="5.500" ry="2.100" fill="#f8f8f8" stroke="#a4a4a4" stroke-width=".9"/></g>
<g transform="translate(581 74)"><rect x=".5" y=".5" width="13" height="13" fill="#fff" stroke="#6f9ad8"/><path d="M.5 13.500h13v-13" fill="none" stroke="#4f7cc4" stroke-width="1"/><path d="M2 2.500h10" stroke="#7fc06a" stroke-width="1"/><path d="M2 5.200h10M2 7.400h10M2 9.600h10M2 11.800h10" stroke="#a4c0ea" stroke-width="1.300"/><path d="M4.600 4.500v8M8.600 4.500v8" stroke="#fff" stroke-width=".8"/></g>
<path d="M692 74.5h5M699 74.5h5M692 76.5h5M699 76.5h5M692 78.5h5M699 78.5h5M692 80.5h5M699 80.5h5M692 82.5h5M699 82.5h5M692 84.5h5M699 84.5h5" stroke="#2a2a2a" stroke-width="1"/>
<path d="M758 74.500v14.500l8.600-7.200z" fill="url(#gBlue)" stroke="#3f66c8" stroke-width=".9"/>
<g transform="translate(835 76)"><rect x=".5" y=".5" width="13" height="7.500" rx="1" fill="#dedede" stroke="#9a9a9a" stroke-width=".9"/><path d="M2.500 3h9M2.500 5h9" stroke="#b4b4b4" stroke-width=".9"/><circle cx="12" cy="8" r="3.500" fill="#5cb85c" stroke="#3f9a3c" stroke-width=".6"/><path d="M12 6v4M10 8h4" stroke="#fff" stroke-width="1.200"/></g>
<path d="M814 102v11l5.500-5.500zM819.500 102v11l5.500-5.500z" fill="#a0a0a0" stroke="#7c7c7c" stroke-width=".8"/>
<path d="M920.500 102.500v10" stroke="#7c7c7c" stroke-width="1.600"/><path d="M927 102.500v10l-5.200-5z" fill="#a0a0a0" stroke="#7c7c7c" stroke-width=".7"/><path d="M929.500 102.500v10l5.200-5z" fill="#a0a0a0" stroke="#7c7c7c" stroke-width=".7"/><path d="M935.800 102.500v10" stroke="#7c7c7c" stroke-width="1.600"/>
<path d="M1039 103.500h12.400l-6.200 6.400z" fill="#3f8ae8"/><path d="M1040.500 104.300h9.400l-4.700 2z" fill="#8fc0f8"/>
<path d="M1148.500 103.500h13.600l-6.800 6.400z" fill="#6e6e6e"/><path d="M1150 104.300h10.600l-5.300 2z" fill="#a8a8a8"/>
<path d="M1257 103.500h13.600l-6.800 6.400z" fill="#6e6e6e"/><path d="M1258.500 104.300h10.600l-5.300 2z" fill="#a8a8a8"/>
<path d="M355.500 124.500v11.500M353.500 134l2 2.600 2-2.600" fill="none" stroke="#4a86d8" stroke-width="1"/>
<path d="M1352.200 642l3.300-3.500 3.300 3.500" fill="none" stroke="#606060" stroke-width="1.900"/>
<path d="M1352.200 696.500l3.300 3.500 3.300-3.500" fill="none" stroke="#606060" stroke-width="1.900"/>
<g transform="translate(531 719.500)"><circle r="6.300" fill="#f4f4f4" stroke="#c8a060" stroke-width="1.400"/><circle r="4.800" fill="#eef4ff" stroke="#a8c0e8" stroke-width=".8"/><path d="M0-3v3.200l-2.200 1.400" fill="none" stroke="#5a5a6a" stroke-width="1"/></g>
<g transform="translate(660.500 711)"><path d="M8 .5l2.300 5 5.400.600-4 3.700 1.100 5.400L8 12.500l-4.800 2.700 1.100-5.400-4-3.700 5.400-.600z" fill="#f8d84a" stroke="#e0b020" stroke-width=".6" stroke-linejoin="round"/><path d="M2.500 11.500c2-.5 3.500-2 5.500-4.500 1.500-2 3.500-3.500 6.500-4.500-1 2-2 3-3 4.500-1.500 2.500-4 4.500-6.500 5-1 .2-2 0-2.500-.500z" fill="#8a5a3c"/><path d="M1 12.500l2.500-1" stroke="#6a6a70" stroke-width="1.300"/></g>
<g transform="translate(988.800 720.300)"><path d="M-6-5.500l2.500-2.200M6-5.500l-2.500-2.200" stroke="#4a80c8" stroke-width="2.200" stroke-linecap="round"/><circle r="6.200" fill="#f4f8ff" stroke="#4a86d0" stroke-width="1.700"/><path d="M0-3.400v3.600l2.600 1.200" fill="none" stroke="#d07a30" stroke-width="1.100"/><path d="M-4.200 6.200l1.200-1.600M4.200 6.200l-1.200-1.600" stroke="#4a80c8" stroke-width="1.200"/></g>
<circle cx="1127" cy="719.500" r="2.700" fill="#6cc04a" stroke="#a8d890" stroke-width="1"/>
<path transform="translate(.3 -.7)" d="M15.600 742.100l6.600-.9v6.500h-6.600zM23.200 741l8.800-1.300v8h-8.800zM15.600 748.700h6.600v6.500l-6.600-.9zM23.200 748.700h8.800v8l-8.800-1.300z" fill="#fff"/>
<circle cx="68.100" cy="747.900" r="9.550" fill="none" stroke="#8a8a8a" stroke-width="4" opacity=".35"/><circle cx="68.100" cy="747.900" r="9.550" fill="none" stroke="#141414" stroke-width="2.900"/>
<g transform="translate(371.600 0)"><rect x="-3.350" y="740" width="6.700" height="11.600" rx="1.300" fill="#2b2b2b"/><rect x="-2.450" y="740.900" width="4.900" height="5.200" rx=".5" fill="#f4f4f4"/><path d="M-5.100 748.300v2.200a3 3 0 0 0 3 3h4.200a3 3 0 0 0 3-3v-2.200" fill="none" stroke="#2b2b2b" stroke-width="1.100"/><path d="M0 753.500v2.100M-2.600 755.600h5.200" stroke="#2b2b2b" stroke-width="1.100"/></g>
<g fill="none" stroke="#fff" stroke-width="1.200"><path d="M408.400 740v2.300h10.100v-2.300"/><rect x="408.400" y="744.600" width="10.100" height="5.900"/><path d="M408.400 755.100v-2.500h10.100v2.500"/><path d="M422.600 740v2.900M422.600 748.200v6.900" stroke-width="1.400"/><rect x="421.200" y="744.200" width="2.800" height="2.800" fill="#fff" stroke="none"/></g>
<g transform="translate(466.700 747.900)"><circle r="11" fill="#db4437"/><path d="M0 0L-9.530 5.500A11 11 0 0 1 -9.530-5.500z" fill="#db4437"/><path d="M-9.530-5.500A11 11 0 0 1 9.530-5.500L0-5.500z" fill="#db4437"/><path d="M0 0L-9.530-5.500A11 11 0 0 0 -0 11L4.760 2.750z" fill="#0f9d58" transform="rotate(0)"/><path d="M9.530-5.500A11 11 0 0 1 0 11L4.760 2.750 0-5.500z" fill="#ffcd40"/><path d="M-9.530-5.500L-4.760 2.750 0 11A11 11 0 0 1 -9.530-5.500z" fill="#0f9d58"/><circle r="5" fill="#f1f1f1"/><circle r="4" fill="#4285f4"/></g>
<g transform="translate(505.300 739)"><path d="M0 .8a.8.8 0 0 1 .8-.8h6.400l1.600 1.800h11.400a.8.8 0 0 1 .8.8v14.400H0z" fill="#f5c84c"/><rect x="1.600" y="1" width="4.800" height="1.300" fill="#4aa8e8"/><path d="M0 4.200h21v12.200a.6.600 0 0 1-.6.600H.6a.6.600 0 0 1-.6-.6z" fill="#ffe68c"/><path d="M3.800 18v-7.200a1.300 1.300 0 0 1 1.300-1.300h10.800a1.300 1.300 0 0 1 1.300 1.300V18h-3.500v-5.200H7.300V18z" fill="#3aa8e8"/></g>
<g transform="translate(552.700 736.500)"><path d="M7.600 5.600v-.8a4.400 4.400 0 0 1 8.800 0v.8" fill="none" stroke="#fff" stroke-width="1.200"/><path d="M.4 5.400h23.200v15a2 2 0 0 1-2 2H2.400a2 2 0 0 1-2-2z" fill="#fff"/><rect x="6.400" y="8.700" width="4.900" height="4.900" fill="#f25022"/><rect x="12.500" y="8.700" width="4.900" height="4.900" fill="#7fba00"/><rect x="6.400" y="14.700" width="4.900" height="4.800" fill="#00a4ef"/><rect x="12.500" y="14.700" width="4.900" height="4.800" fill="#ffb900"/></g>
<g transform="translate(601.800 737.800)"><path d="M0 6L12.200 0 24.400 6v13H0z" fill="#fff"/><path d="M1.600 6.500h21.200L12.600 12.200l6.600 5.600z" fill="#101010"/><path d="M1.600 6.500l11 5.700" stroke="#101010" stroke-width="1"/></g>
<g transform="translate(662.900 747.900)"><circle r="12" fill="#76b83f"/><circle r="11.300" fill="none" stroke="#5a9a30" stroke-width="1"/><text x="-9" y="7.400" font-family="Liberation Sans,sans-serif" font-weight="bold" font-size="25" fill="#fff" textLength="18.500" lengthAdjust="spacingAndGlyphs">µ</text></g>
<g transform="translate(701.300 740.800)"><rect width="21" height="14.200" fill="#3a9be0"/><rect x="1" y="1" width="19" height="12.200" fill="#5cb4f0"/><circle cx="6.500" cy="5.800" r="3.400" fill="#e8f4ff"/><path d="M6.500 5.800V2.400A3.400 3.400 0 0 1 9.900 5.800z" fill="#f0a030"/><path d="M12.500 3.500h6M12.500 6h6M12.500 8.500h6" stroke="#e8f4ff" stroke-width="1.300"/><path d="M3 11.300h10" stroke="#f0c040" stroke-width="1"/></g>
<g transform="translate(760.400 747.300)"><circle r="11.500" fill="#f2f2f2"/><path d="M-11.500 .2A11.500 11.500 0 0 1 11.500 .2z" fill="#3fae14"/><ellipse cx="0" cy="-6.500" rx="7.500" ry="4" fill="#7fd850" opacity=".8"/><circle r="11.200" fill="none" stroke="#2a5a1a" stroke-width=".7" opacity=".55"/><path d="M-9.500 5.500A11 11 0 0 0 9.500 5.500" fill="none" stroke="#b8c0b4" stroke-width="1.200" opacity=".8"/><rect x="-6.500" y="-4.300" width="13" height="8.900" fill="#f5a81c"/><text x="0" y="3.700" text-anchor="middle" font-family="Liberation Sans,sans-serif" font-weight="bold" font-size="10.500" fill="#111" textLength="12" lengthAdjust="spacingAndGlyphs">HS</text></g>
<g fill="none" stroke="#fff" stroke-width="1.150"><circle cx="1066.300" cy="742.700" r="2.500"/><path d="M1063 748.600c.6-3.600 6-3.600 7.200.3"/><circle cx="1059.900" cy="748.700" r="2.400"/><path d="M1056.300 755.300c.6-4.400 6.600-4.400 7.600-.2"/></g>
<path d="M1092.700 751l6.200-6.200 6.200 6.200" fill="none" stroke="#fff" stroke-width="1.300"/>
<g transform="translate(1123 747.600)"><path d="M-5-5.200c-1.200.3-2 .8-2 .8-1.400 2.800-1.800 5.800-1.600 8 1.400 1 2.800 1.500 3.400 1.500l.9-1.400h8.600l.9 1.400c.6 0 2-.5 3.400-1.500.2-2.200-.2-5.200-1.600-8 0 0-.8-.5-2-.8l-.5 1h-7z" fill="#fff" transform="scale(.86 1)"/><circle cx="-2.300" cy="1" r="1.200" fill="#101010"/><circle cx="2.300" cy="1" r="1.200" fill="#101010"/><circle cx="5.200" cy="-5" r="2.600" fill="#f04747"/></g>
<g transform="translate(1146.900 748)"><circle r="7.900" fill="#1b4f8a"/><path d="M-7.900 0A7.900 7.900 0 0 1 7.900 0z" fill="#12305c"/><circle cx="3" cy="-2.400" r="2.600" fill="none" stroke="#fff" stroke-width="1.200"/><circle cx="-2.600" cy="3.200" r="2" fill="#fff"/><path d="M-7.500 1l5 2.200M-1.500 2L1.300-.8" stroke="#fff" stroke-width="1.500"/></g>
<g fill="none" stroke="#fff" stroke-width="1.200"><rect x="1167.300" y="742.700" width="11" height="8.500"/><path d="M1172.800 751.200v3M1168.600 754.400h8.600"/><rect x="1163.400" y="742.400" width="3.600" height="4" fill="#101010"/><path d="M1165.200 746.400v4.200h2.100"/></g>
<g fill="none" stroke="#fff" stroke-width="1.150"><path d="M1187.600 745.500h2.600l3.600-3.600v12.200l-3.600-3.600h-2.600z"/><path d="M1196 745.400c1.300 1.500 1.300 3.700 0 5.200M1198.200 743.400c2.500 2.700 2.500 6.500 0 9.200M1200.400 741.600c3.200 3.700 3.200 9.100 0 12.800"/></g>
<g><path d="M1325.700 740.800h15v10.200h-9.500l-2.700 2.800v-2.800h-2.800z" fill="#fff"/><path d="M1328.200 743.600h10M1328.200 746h10M1328.200 748.400h6" stroke="#101010" stroke-width="1"/><circle cx="1340.500" cy="754.800" r="7.600" fill="#2a2a2a" stroke="#8a8a8a" stroke-width="1.100"/></g>
<text x="1340.500" y="759" text-anchor="middle" font-family="Liberation Sans,sans-serif" font-size="11.500" fill="#fff">1</text>
</svg>
</body></html>
